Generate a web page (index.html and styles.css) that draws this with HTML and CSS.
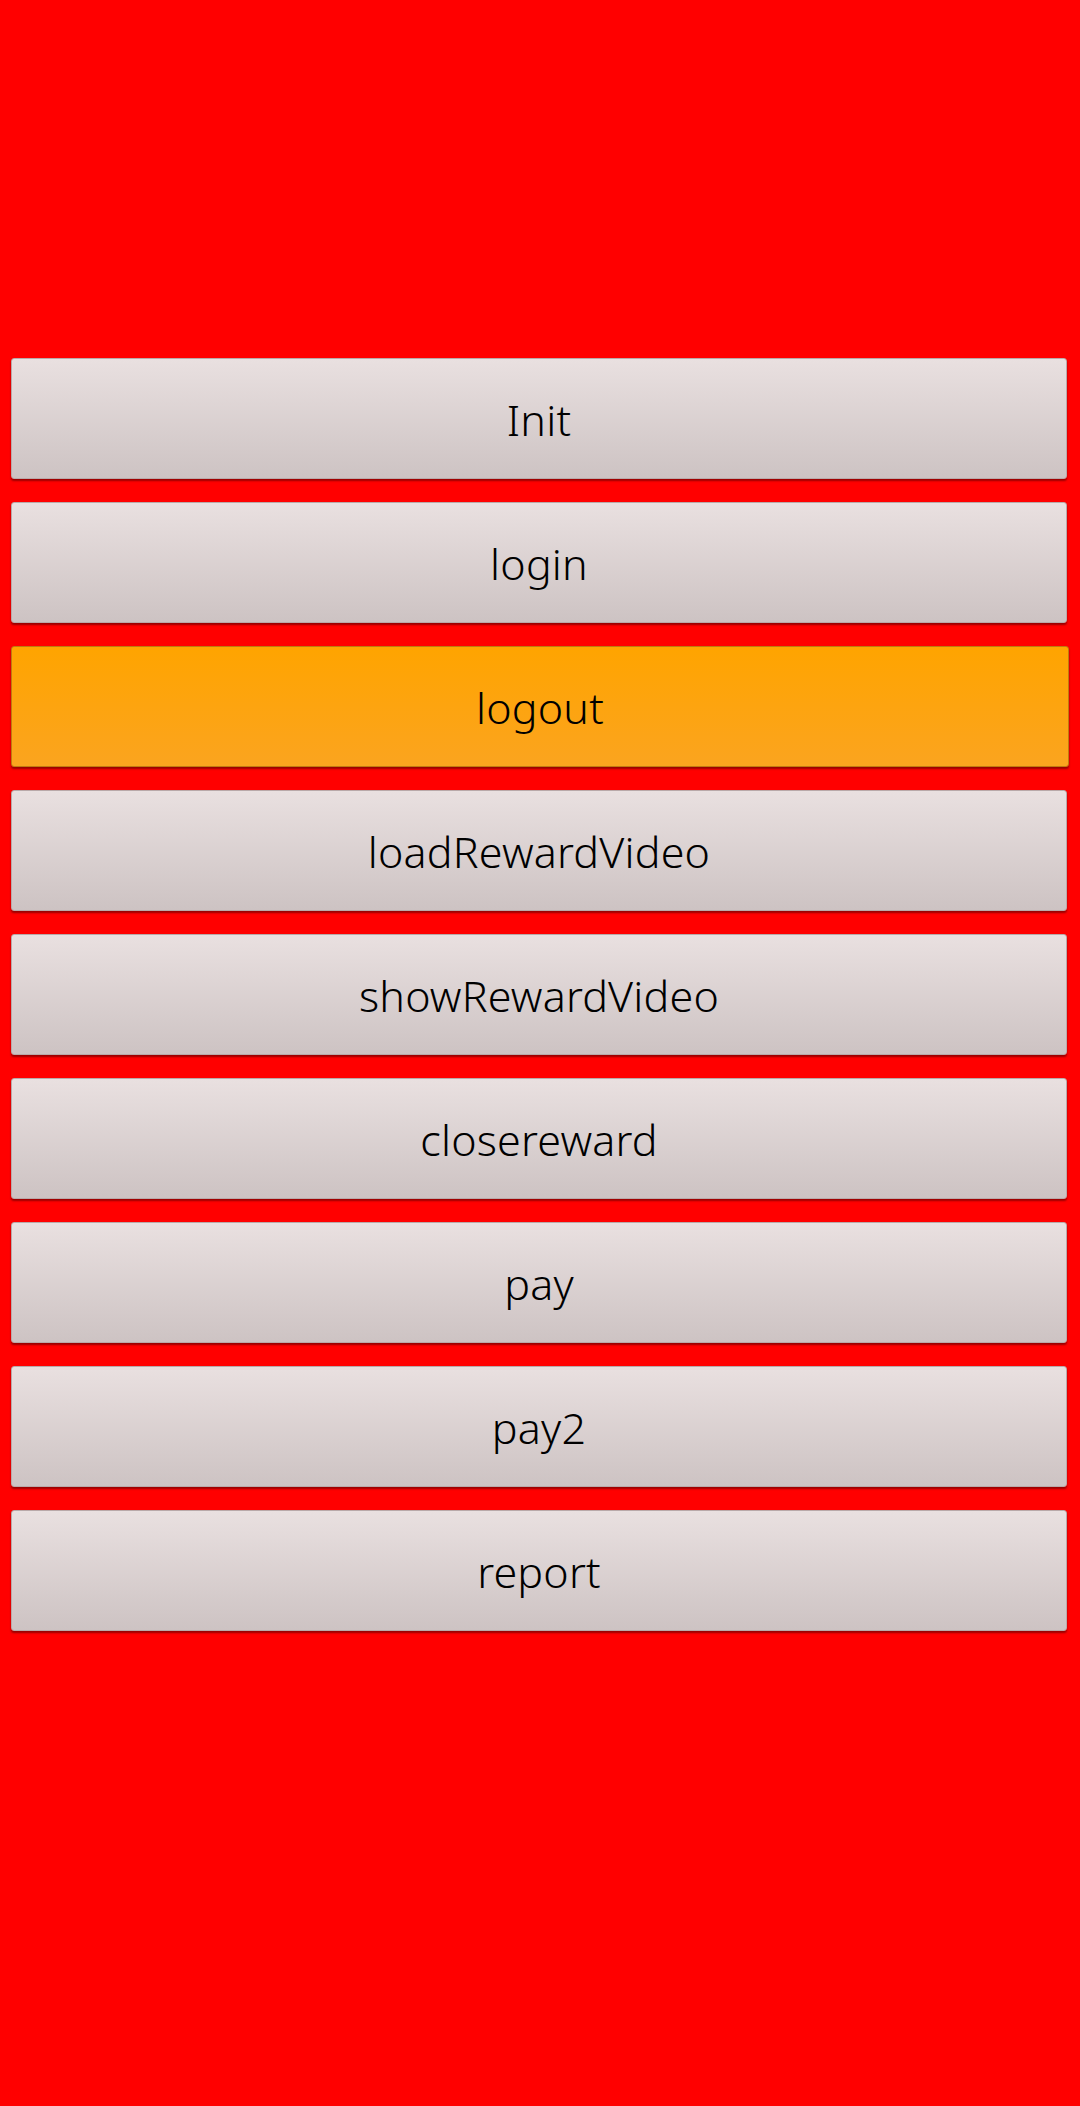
FILE: index.html
```html
<!DOCTYPE html>
<html>
<head>
<meta charset="utf-8">
<link rel="stylesheet" href="styles.css">
</head>
<body>
<div class="list">
  <button class="btn">Init</button>
  <button class="btn">login</button>
  <button class="btn btn-active">logout</button>
  <button class="btn">loadRewardVideo</button>
  <button class="btn">showRewardVideo</button>
  <button class="btn">closereward</button>
  <button class="btn">pay</button>
  <button class="btn">pay2</button>
  <button class="btn">report</button>
</div>
</body>
</html>
```

FILE: styles.css
```css
html, body {
  margin: 0;
  padding: 0;
  background: #ff0000;
  width: 1080px;
  height: 2106px;
}
.list {
  display: flex;
  flex-direction: column;
  gap: 23px;
  padding: 358px 13px 0 11px;
}
.btn {
  height: 121px;
  width: 100%;
  margin: 0;
  padding: 2px 0 0 0;
  border: 1px solid #b9a9a9;
  border-radius: 3px;
  background: linear-gradient(to bottom, #e9e0e0, #cdc3c3);
  box-shadow: 0 2px 2px rgba(110, 0, 0, 0.7);
  font-family: "Noto Sans", sans-serif;
  font-size: 43px;
  font-weight: 350;
  letter-spacing: 0.2px;
  color: #000;
  display: flex;
  align-items: center;
  justify-content: center;
}
.btn-active {
  background: linear-gradient(to bottom, #ffa400, #fba41f);
  border-color: #c07a10;
  width: calc(100% + 2px);
}
```
